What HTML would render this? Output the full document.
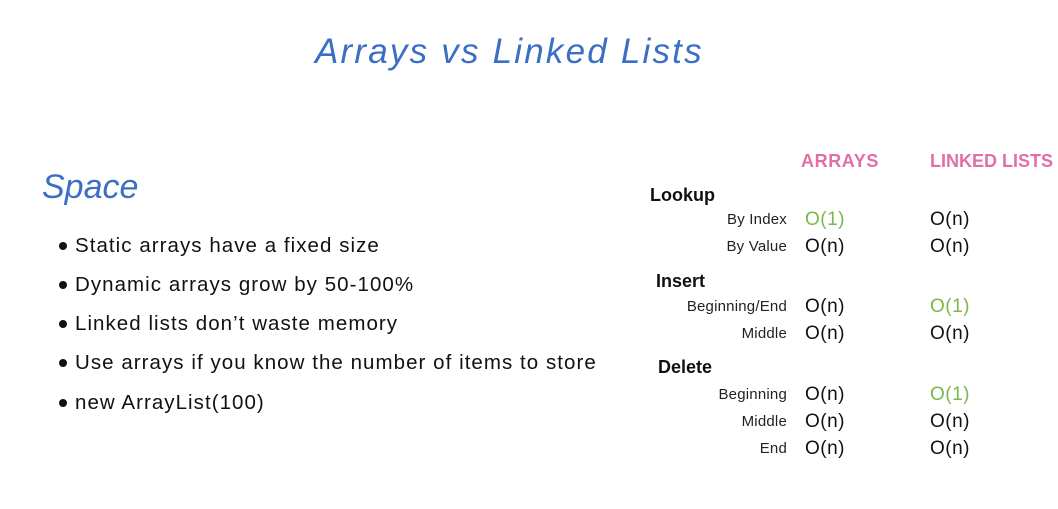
<!DOCTYPE html>
<html><head><style>
body{margin:0;width:1058px;height:509px;background:#fff;position:relative;overflow:hidden;font-family:"Liberation Sans",sans-serif;}
div{position:absolute;white-space:nowrap;}
.t{color:#3a6fc4;font-style:italic;}
.b{font-size:20.5px;color:#111;left:75px;letter-spacing:1.05px;}
.d{width:8px;height:8px;border-radius:50%;background:#111;left:59px;}
.h{font-weight:bold;font-size:18px;color:#111;}
.l{font-size:15px;color:#222;right:271px;text-align:right;letter-spacing:0.2px;}
.o{font-size:19px;color:#111;letter-spacing:0.5px;}
.g{color:#7ab84a;}
.p{color:#e06fa5;font-weight:bold;font-size:18px;}
</style></head><body>
<div class="t" style="left:315px;top:32px;font-size:35px;letter-spacing:2.2px;">Arrays vs Linked Lists</div>
<div class="t" style="left:42px;top:168px;font-size:34px;">Space</div>
<div class="d" style="top:242px"></div><div class="b" style="top:234px">Static arrays have a fixed size</div>
<div class="d" style="top:281px"></div><div class="b" style="top:273px">Dynamic arrays grow by 50-100%</div>
<div class="d" style="top:320px"></div><div class="b" style="top:312px">Linked lists don’t waste memory</div>
<div class="d" style="top:359px"></div><div class="b" style="top:351px">Use arrays if you know the number of items to store</div>
<div class="d" style="top:399px"></div><div class="b" style="top:391px">new ArrayList(100)</div>
<div class="p" style="left:801px;top:151px;letter-spacing:0.6px">ARRAYS</div>
<div class="p" style="left:930px;top:151px">LINKED LISTS</div>
<div class="h" style="left:650px;top:185px">Lookup</div>
<div class="l" style="top:211px">By Index</div><div class="o g" style="left:805px;top:209px">O(1)</div><div class="o" style="left:930px;top:209px">O(n)</div>
<div class="l" style="top:238px">By Value</div><div class="o" style="left:805px;top:236px">O(n)</div><div class="o" style="left:930px;top:236px">O(n)</div>
<div class="h" style="left:656px;top:271px">Insert</div>
<div class="l" style="top:298px">Beginning/End</div><div class="o" style="left:805px;top:296px">O(n)</div><div class="o g" style="left:930px;top:296px">O(1)</div>
<div class="l" style="top:325px">Middle</div><div class="o" style="left:805px;top:323px">O(n)</div><div class="o" style="left:930px;top:323px">O(n)</div>
<div class="h" style="left:658px;top:357px">Delete</div>
<div class="l" style="top:386px">Beginning</div><div class="o" style="left:805px;top:384px">O(n)</div><div class="o g" style="left:930px;top:384px">O(1)</div>
<div class="l" style="top:413px">Middle</div><div class="o" style="left:805px;top:411px">O(n)</div><div class="o" style="left:930px;top:411px">O(n)</div>
<div class="l" style="top:440px">End</div><div class="o" style="left:805px;top:438px">O(n)</div><div class="o" style="left:930px;top:438px">O(n)</div>
</body></html>
